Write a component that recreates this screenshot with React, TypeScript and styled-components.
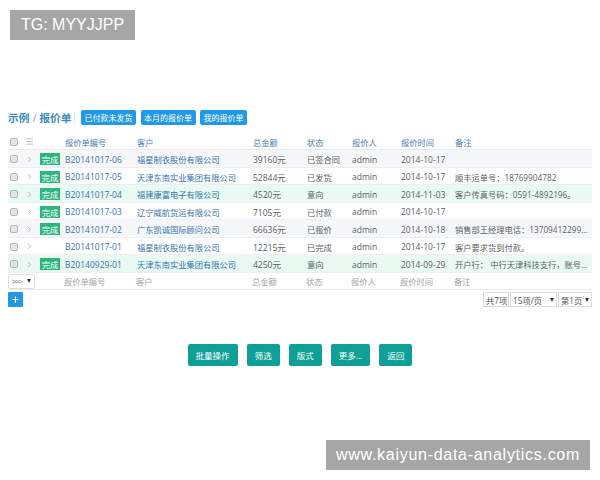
import { createGlobalStyle, styled } from "styled-components";
import { ChevronRight, Menu, Plus } from "lucide-react";

interface Quote {
  code: string;
  customer: string;
  amount: string;
  status: string;
  date: string;
  note?: string;
  done?: boolean;
  tone?: "gray" | "green";
}

const quotes: Quote[] = [
  { code: "B20141017-06", customer: "福星制衣股份有限公司", amount: "39160元", status: "已签合同", date: "2014-10-17", done: true, tone: "gray" },
  { code: "B20141017-05", customer: "天津东南实业集团有限公司", amount: "52844元", status: "已发货", date: "2014-10-17", note: "顺丰运单号：18769904782", done: true },
  { code: "B20141017-04", customer: "福建康富电子有限公司", amount: "4520元", status: "意向", date: "2014-11-03", note: "客户传真号码：0591-4892196。", done: true, tone: "green" },
  { code: "B20141017-03", customer: "辽宁威航货运有限公司", amount: "7105元", status: "已付款", date: "2014-10-17", done: true },
  { code: "B20141017-02", customer: "广东凯诚国际顾问公司", amount: "66636元", status: "已报价", date: "2014-10-18", note: "销售部王经理电话：13709412299...", done: true, tone: "gray" },
  { code: "B20141017-01", customer: "福星制衣股份有限公司", amount: "12215元", status: "已完成", date: "2014-10-17", note: "客户要求货到付款。" },
  { code: "B20140929-01", customer: "天津东南实业集团有限公司", amount: "4250元", status: "意向", date: "2014-09-29", note: "开户行： 中行天津科技支行，账号...", done: true, tone: "green" },
];

const App = () => {
  return (
    <>
      <GlobalStyle />
      <Page>
        <TopBadge>TG: MYYJJPP</TopBadge>
        <Toolbar>
          <Title>
            示例<Slash>/</Slash>报价单
          </Title>
          <Divider />
          <FilterButton>已付款未发货</FilterButton>
          <FilterButton>本月的报价单</FilterButton>
          <FilterButton>我的报价单</FilterButton>
        </Toolbar>

        <Table>
          <HeadRow>
            <CheckCell>
              <Check />
            </CheckCell>
            <ToggleCell>
              <Menu size={9} strokeWidth={1.5} color="#888" />
            </ToggleCell>
            <span />
            <Cell>报价单编号</Cell>
            <Cell>客户</Cell>
            <Cell>总金额</Cell>
            <Cell>状态</Cell>
            <Cell>报价人</Cell>
            <Cell>报价时间</Cell>
            <Cell>备注</Cell>
          </HeadRow>
          {quotes.map((quote) => (
            <BodyRow key={quote.code} $tone={quote.tone}>
              <CheckCell>
                <Check />
              </CheckCell>
              <ToggleCell>
                <ChevronRight size={9} strokeWidth={1.5} color="#888" />
              </ToggleCell>
              <BadgeCell>{quote.done && <DoneBadge>完成</DoneBadge>}</BadgeCell>
              <CodeCell>{quote.code}</CodeCell>
              <LinkCell>{quote.customer}</LinkCell>
              <NumberCell>{quote.amount}</NumberCell>
              <Cell>{quote.status}</Cell>
              <NumberCell>admin</NumberCell>
              <NumberCell>{quote.date}</NumberCell>
              <Cell>{quote.note}</Cell>
            </BodyRow>
          ))}
          <FootRow>
            <FootPicker>
              <Glyph>&gt;&gt;&gt;</Glyph>
              <Caret />
            </FootPicker>
            <Cell>报价单编号</Cell>
            <Cell>客户</Cell>
            <Cell>总金额</Cell>
            <Cell>状态</Cell>
            <Cell>报价人</Cell>
            <Cell>报价时间</Cell>
            <Cell>备注</Cell>
          </FootRow>
        </Table>

        <PagerRow>
          <AddButton>
            <Plus size={9} strokeWidth={3} color="#fff" />
          </AddButton>
          <Pager>
            <PagerBox $width={26}>共7项</PagerBox>
            <PagerBox $width={47}>
              15项/页
              <Caret />
            </PagerBox>
            <PagerBox $width={34}>
              第1页
              <Caret />
            </PagerBox>
          </Pager>
        </PagerRow>

        <Actions>
          <ActionButton>批量操作</ActionButton>
          <ActionButton>筛选</ActionButton>
          <ActionButton>版式</ActionButton>
          <ActionButton>更多...</ActionButton>
          <ActionButton>返回</ActionButton>
        </Actions>

        <BottomBadge>www.kaiyun-data-analytics.com</BottomBadge>
      </Page>
    </>
  );
};

export default App;

const GlobalStyle = createGlobalStyle`
  html, body {
    margin: 0;
    background: #fff;
  }
`;

const Page = styled.div`
  position: relative;
  width: 600px;
  height: 480px;
  padding: 110px 8px 0;
  box-sizing: border-box;
  overflow: hidden;
  font-family: "Open Sans", "Noto Sans CJK SC", sans-serif;
  font-size: 8.25px;
  color: #5a6068;
`;

const TopBadge = styled.div`
  position: absolute;
  left: 10px;
  top: 10px;
  width: 125px;
  height: 30px;
  display: flex;
  align-items: center;
  justify-content: center;
  background: #a6a6a6;
  color: #fff;
  font-family: "Liberation Sans", sans-serif;
  font-size: 16px;
`;

const BottomBadge = styled.div`
  position: absolute;
  left: 326px;
  top: 440px;
  width: 264px;
  height: 30px;
  display: flex;
  align-items: center;
  justify-content: center;
  background: #a6a6a6;
  color: #fff;
  font-family: "Liberation Sans", sans-serif;
  font-size: 16px;
  letter-spacing: 0.72px;
  white-space: nowrap;
`;

const Toolbar = styled.div`
  display: flex;
  align-items: center;
  height: 15px;
  gap: 4.5px;
`;

const Title = styled.div`
  width: 61px;
  font-size: 10.7px;
  font-weight: 700;
  color: #3d8bc4;
  white-space: nowrap;
`;

const Slash = styled.span`
  margin: 0 3px;
  font-weight: 400;
  color: #9aa4ad;
`;

const Divider = styled.span`
  width: 1px;
  height: 10px;
  margin-right: 2px;
  background: #e4e6e9;
`;

const FilterButton = styled.div`
  height: 15px;
  padding: 0 3.5px;
  display: flex;
  align-items: center;
  border-radius: 2px;
  background: #2299e6;
  color: #fff;
  font-size: 8px;
  white-space: nowrap;
`;

const Table = styled.div`
  margin-top: 9px;
`;

const columns = "16px 14px 25px 72px 116px 54px 45px 49px 54px 139px";

const HeadRow = styled.div`
  display: grid;
  grid-template-columns: ${columns};
  align-items: center;
  height: 16px;
  box-sizing: border-box;
  color: #4a7fb5;
  border-bottom: 1px solid #e6e8ec;
`;

const BodyRow = styled.div<{ $tone?: "gray" | "green" }>`
  display: grid;
  grid-template-columns: ${columns};
  align-items: center;
  height: 17.5px;
  padding-top: 2px;
  box-sizing: border-box;
  border-bottom: 1px solid #eceef1;
  background: ${({ $tone }) =>
    $tone === "green" ? "#e8faf2" : $tone === "gray" ? "#f6f7f9" : "#fff"};
`;

const Cell = styled.div`
  padding-left: 2px;
  white-space: nowrap;
  overflow: hidden;
`;

const LinkCell = styled(Cell)`
  color: #3574b3;
`;

const CodeCell = styled(LinkCell)`
  font-size: 8.5px;
`;

const NumberCell = styled(Cell)`
  font-size: 8.5px;
`;

const CheckCell = styled.div`
  display: flex;
  padding-left: 2px;
`;

const Check = styled.span`
  width: 8px;
  height: 8px;
  box-sizing: border-box;
  border: 1px solid #b5b8bc;
  border-radius: 2px;
  background: #e3e4e6;
`;

const ToggleCell = styled.div`
  display: flex;
  padding-left: 1px;
`;

const BadgeCell = styled.div`
  display: flex;
  padding-left: 2px;
`;

const DoneBadge = styled.span`
  width: 20px;
  height: 12px;
  display: flex;
  align-items: center;
  justify-content: center;
  background: #2cb67d;
  color: #fff;
  font-size: 8.25px;
  white-space: nowrap;
`;

const FootRow = styled.div`
  display: grid;
  grid-template-columns: 54px 72px 116px 54px 45px 49px 54px 139px;
  align-items: center;
  height: 17.5px;
  padding-top: 1px;
  box-sizing: border-box;
  border-bottom: 1px solid #e6e8ec;
  color: #a2a6ab;
`;

const FootPicker = styled.div`
  width: 27px;
  height: 15px;
  padding: 0 3px;
  display: flex;
  align-items: center;
  justify-content: space-between;
  box-sizing: border-box;
  border: 1px solid #ddd;
  border-radius: 2px;
  color: #777;
`;

const Glyph = styled.span`
  font-family: "Liberation Sans", sans-serif;
  font-size: 7px;
  letter-spacing: -1px;
`;

const Caret = styled.span`
  width: 0;
  height: 0;
  border-left: 2.5px solid transparent;
  border-right: 2.5px solid transparent;
  border-top: 4px solid #333;
`;

const PagerRow = styled.div`
  display: flex;
  justify-content: space-between;
  align-items: flex-start;
  margin-top: 2px;
`;

const AddButton = styled.div`
  width: 15px;
  height: 15px;
  display: flex;
  align-items: center;
  justify-content: center;
  border-radius: 1px;
  background: #2299e6;
`;

const Pager = styled.div`
  display: flex;
  gap: 1px;
`;

const PagerBox = styled.div<{ $width: number }>`
  width: ${({ $width }) => $width}px;
  height: 15px;
  padding: 0 2px;
  display: flex;
  align-items: center;
  justify-content: space-between;
  box-sizing: border-box;
  border: 1px solid #ddd;
  color: #555;
  white-space: nowrap;
`;

const Actions = styled.div`
  display: flex;
  justify-content: center;
  gap: 9px;
  margin-top: 37px;
`;

const ActionButton = styled.div`
  height: 22px;
  padding: 0 8px;
  display: flex;
  align-items: center;
  border-radius: 2px;
  background: #0e9f97;
  color: #fff;
  font-size: 8.5px;
  white-space: nowrap;
`;
